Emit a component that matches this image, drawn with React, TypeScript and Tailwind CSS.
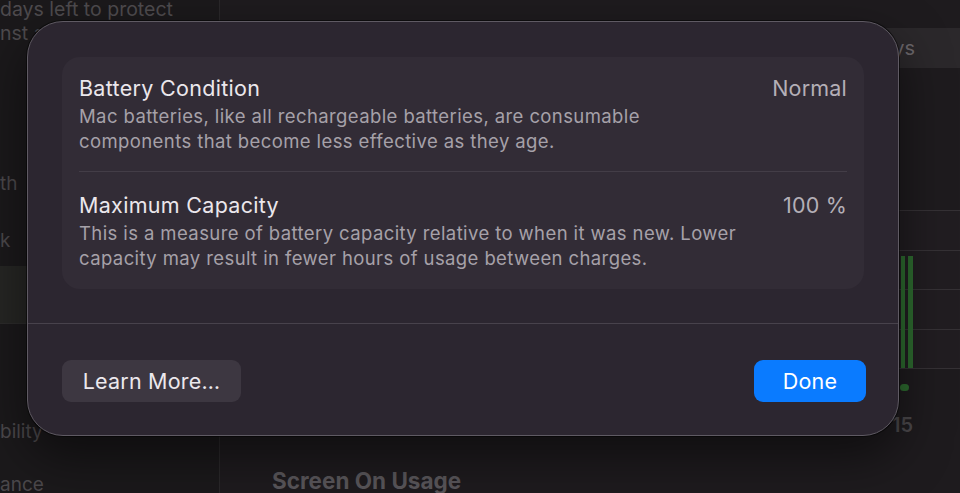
import React from "react";

const font = { fontFamily: "Inter, 'Noto Sans', sans-serif" };

function SidebarLabel({ text, className }: { text: string; className: string }) {
  return (
    <div className={`h-[26px] shrink-0 leading-[26px] text-[19px] text-[#4b484b] whitespace-nowrap ${className}`}>
      {text}
    </div>
  );
}

function Section({
  title,
  value,
  lines,
  className,
}: {
  title: string;
  value: string;
  lines: string[];
  className: string;
}) {
  return (
    <div className={`flex justify-between ${className}`}>
      <div>
        <div className="text-[21.5px] leading-[24px] tracking-[0.3px] text-[#ebe7ec]">{title}</div>
        <div className="mt-[4px] text-[18.5px] leading-[25px] tracking-[0.4px] text-[#a6a1a9]">
          {lines.map((l) => (
            <div key={l} className="whitespace-nowrap">{l}</div>
          ))}
        </div>
      </div>
      <div className="text-[21.5px] leading-[24px] tracking-[0.2px] text-[#b4afb7]">{value}</div>
    </div>
  );
}

export default function App() {
  return (
    <div
      className="relative flex h-[493px] w-[960px] overflow-hidden bg-[#1d1b1d]"
      style={font}
    >
      {/* Settings sidebar */}
      <div className="flex w-[220px] shrink-0 flex-col border-r border-[#2a282a] bg-[#1b191b]">
        <div className="-mt-[3px] shrink-0 text-[19.5px] leading-[24px] text-[#4e4b4e] whitespace-nowrap">
          <div>days left to protect</div>
          <div>nst again</div>
        </div>
        <SidebarLabel text="th" className="mt-[126px]" />
        <SidebarLabel text="k" className="mt-[31px]" />
        <div className="mt-[12px] h-[58px] shrink-0 border-b border-[#2c2b2b] bg-[#262624]" />
        <SidebarLabel text="bility" className="mt-[95px]" />
        <SidebarLabel text="ance" className="mt-[27px]" />
      </div>

      {/* Main pane */}
      <div className="relative flex min-w-0 flex-1 flex-col bg-[#1e1b1e] pt-[28px]">
        <div className="ml-[40px] flex h-[40px] shrink-0 items-center justify-end rounded-l-[10px] bg-[#2b282b] pr-[45px]">
          <span className="text-[20px] text-[#6b676b]">Last 10 Days</span>
        </div>

        <div className="relative mt-[142px] shrink-0 bg-[#211d21]">
          {[0, 1, 2, 3].map((i) => (
            <div key={i} className="h-[39.5px] border-t border-[#353135]" />
          ))}
          <div className="border-t border-[#353135]" />
          <div className="absolute left-[681px] top-[46px] h-[112px] w-[4px] bg-[#2d6a2f]" />
          <div className="absolute left-[688px] top-[46px] h-[112px] w-[5px] bg-[#2d6a2f]" />
          <div className="absolute left-[680px] top-[174px] h-[7px] w-[9px] rounded-full bg-[#2d6a2f]" />
        </div>

        <div className="mt-[44px] shrink-0 pl-[672px] text-[20px] font-semibold leading-[24px] text-[#4a474a]">15</div>
        <div className="mt-[32px] shrink-0 pl-[52px] text-[22.5px] font-bold leading-[24px] text-[#59565a]">
          Screen On Usage
        </div>
      </div>

      {/* Battery health sheet */}
      <div className="absolute left-[27px] top-[21px] flex h-[415px] w-[872px] flex-col rounded-[36px] border border-[#5f5a63] bg-[#2c2630] shadow-[0_0_0_1px_rgba(0,0,0,0.5),0_20px_50px_rgba(0,0,0,0.5)]">
        <div className="px-[34px] pt-[35px]">
          <div className="rounded-[18px] bg-[#322c36] px-[17px]">
            <Section
              className="pt-[19px] pb-[17px] border-b border-[#433d47]"
              title="Battery Condition"
              value="Normal"
              lines={[
                "Mac batteries, like all rechargeable batteries, are consumable",
                "components that become less effective as they age.",
              ]}
            />
            <Section
              className="pt-[21px] pb-[18px]"
              title="Maximum Capacity"
              value="100 %"
              lines={[
                "This is a measure of battery capacity relative to when it was new. Lower",
                "capacity may result in fewer hours of usage between charges.",
              ]}
            />
          </div>
        </div>
        <div className="mt-[34px] border-t border-[#48424c]" />
        <div className="flex items-center justify-between pl-[34px] pr-[32px] pt-[36px]">
          <button className="h-[42px] w-[179px] rounded-[9px] bg-[#3d3741] text-[21.5px] tracking-[0.2px] text-[#ece8ed]">
            Learn More…
          </button>
          <button className="h-[42px] w-[112px] rounded-[9px] bg-[#0a7bff] text-[21.5px] tracking-[0.2px] text-white">
            Done
          </button>
        </div>
      </div>
    </div>
  );
}
